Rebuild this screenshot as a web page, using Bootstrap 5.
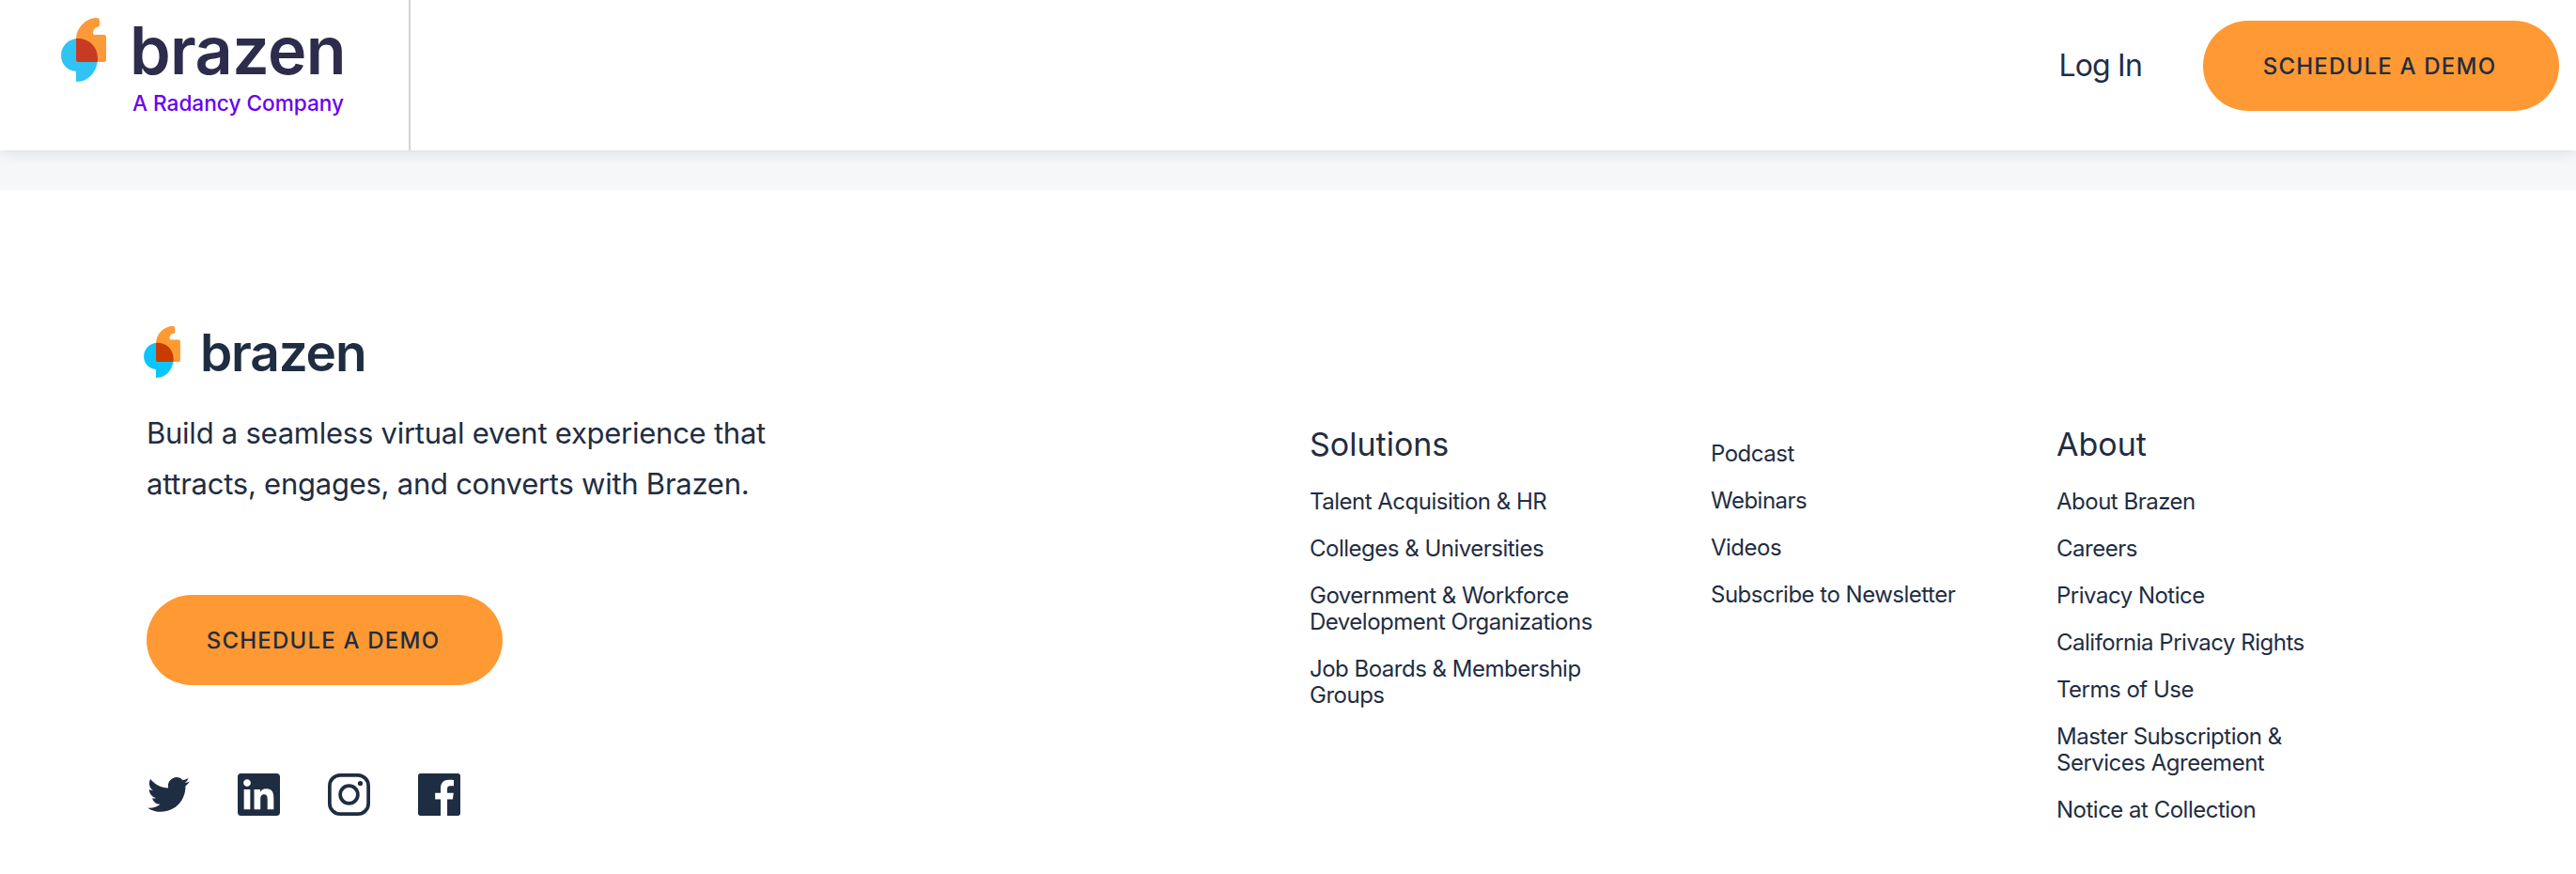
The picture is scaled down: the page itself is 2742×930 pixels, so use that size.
<!DOCTYPE html>
<html lang="en"><head><meta charset="utf-8"><title>Brazen</title>
<link href="https://cdn.jsdelivr.net/npm/bootstrap@5.3.0/dist/css/bootstrap.min.css" rel="stylesheet">
<style>
html,body{height:930px;overflow:hidden;background:#fff}
body{font-family:Inter,"Liberation Sans",sans-serif;color:#1f2d42}
a{color:inherit;text-decoration:none}
.topbar{height:160px;background:#fff;box-shadow:0 2px 14px rgba(30,40,70,.13);position:relative;z-index:2}
.brandbox{width:437px;height:160px;border-right:2px solid #d4d4d6;padding:19px 0 0 65px}
.markbig{width:48px;height:68px}
.wordwrap{margin-left:25px}
.wordbig{font-size:70px;font-weight:600;line-height:70px;color:#2e2c4c;letter-spacing:-.6px}
.subbrand{font-size:22.6px;font-weight:500;line-height:26px;color:#6a00f0;margin:8px 0 0 3px;white-space:nowrap}
.topnav{padding-bottom:20px}
.login{font-size:32px;line-height:40px;letter-spacing:-.8px;margin-right:65px}
.demo{display:inline-flex;align-items:center;justify-content:center;width:379px;height:96px;border-radius:48px;background:#ff9933;color:#1f2d42;font-size:24px;font-weight:500;letter-spacing:1.2px;border:0;padding:2px 3px 0 0}
.demo:hover{background:#ff9933;color:#1f2d42}
.topdemo{margin-right:18px}
.band{height:42px;background:#f6f7f9}
.foot{padding:145px 0 0 156px}
.leftcol{width:1238px}
.footbrand{margin-left:-3px;height:55px}
.markmid{width:39px;height:55px}
.wordmid{font-size:55px;line-height:55px;font-weight:600;letter-spacing:-1.2px;color:#1f2d42;margin-left:21px;margin-top:1px}
.pitch{font-size:31px;line-height:54px;margin:32px 0 0;letter-spacing:-.25px;white-space:nowrap}
.footdemo{margin-top:91px}
.socials{margin:94px 0 0 1px;gap:51px}
.socials svg{width:45px;height:45px;display:block;fill:#1f2d42}
.colsol{width:427px;padding-top:106px}
.colmid{width:368px;padding-top:122px}
.colabout{width:300px;padding-top:106px}
.colhead{font-size:34px;line-height:40px;font-weight:400;margin:0 0 27px;letter-spacing:0}
.linklist{font-size:24px;line-height:28px;display:flex;flex-direction:column;gap:22px;letter-spacing:-.5px}
.colsol .linklist{max-width:340px}
</style></head><body>
<header class="topbar d-flex align-items-center justify-content-between">
 <a href="#" class="brandbox d-flex align-items-start gap-0">
  <svg class="markbig flex-shrink-0" viewBox="65 19 48 68"><defs><clipPath id="oc"><path d="M81 65V42C81 29 92 19 103 19c2 0 3 1 3 3v4c0 2-1 3-3 3-3 1-4 4-4 6 0 2 1 2 2 2h10c1 0 2 1 2 2v25c0 1-1 2-2 2H83c-1 0-2-1-2-2z"/></clipPath></defs>
   <path fill="#2fc4f4" d="M82 87c-1 0-1-1-1-1V76C71 75 65 68 65 59c0-10 8-18 18-18 11 0 21 8 21 21 0 14-10 25-22 25z"/>
   <path fill="#fc9a3a" d="M81 65V42C81 29 92 19 103 19c2 0 3 1 3 3v4c0 2-1 3-3 3-3 1-4 4-4 6 0 2 1 2 2 2h10c1 0 2 1 2 2v25c0 1-1 2-2 2H83c-1 0-2-1-2-2z"/>
   <g clip-path="url(#oc)"><path fill="#c93a22" d="M82 87c-1 0-1-1-1-1V76C71 75 65 68 65 59c0-10 8-18 18-18 11 0 21 8 21 21 0 14-10 25-22 25z"/></g></svg>
  <span class="wordwrap d-block"><span class="wordbig d-block">brazen</span><span class="subbrand d-block">A Radancy Company</span></span>
 </a>
 <nav class="topnav d-flex align-items-center">
  <a href="#" class="login">Log In</a>
  <a href="#" class="btn demo topdemo">SCHEDULE A DEMO</a>
 </nav>
</header>
<div class="band"></div>
<footer class="foot d-flex align-items-start">
 <div class="leftcol">
  <a href="#" class="footbrand d-flex align-items-start">
   <svg class="markmid flex-shrink-0" viewBox="65 19 48 68"><defs><clipPath id="oc2"><path d="M81 65V42C81 29 92 19 103 19c2 0 3 1 3 3v4c0 2-1 3-3 3-3 1-4 4-4 6 0 2 1 2 2 2h10c1 0 2 1 2 2v25c0 1-1 2-2 2H83c-1 0-2-1-2-2z"/></clipPath></defs>
    <path fill="#0cc5ff" d="M82 87c-1 0-1-1-1-1V76C71 75 65 68 65 59c0-10 8-18 18-18 11 0 21 8 21 21 0 14-10 25-22 25z"/>
    <path fill="#ff9a33" d="M81 65V42C81 29 92 19 103 19c2 0 3 1 3 3v4c0 2-1 3-3 3-3 1-4 4-4 6 0 2 1 2 2 2h10c1 0 2 1 2 2v25c0 1-1 2-2 2H83c-1 0-2-1-2-2z"/>
    <g clip-path="url(#oc2)"><path fill="#c83c00" d="M82 87c-1 0-1-1-1-1V76C71 75 65 68 65 59c0-10 8-18 18-18 11 0 21 8 21 21 0 14-10 25-22 25z"/></g></svg>
   <span class="wordmid">brazen</span>
  </a>
  <p class="pitch">Build a seamless virtual event experience that<br>attracts, engages, and converts with Brazen.</p>
  <a href="#" class="btn demo footdemo">SCHEDULE A DEMO</a>
  <div class="socials d-flex">
   <a href="#" aria-label="Twitter"><svg viewBox="0 0 24 24"><path d="M23.953 4.57a10 10 0 01-2.825.775 4.958 4.958 0 002.163-2.723c-.951.555-2.005.959-3.127 1.184a4.92 4.92 0 00-8.384 4.482C7.69 8.095 4.067 6.13 1.64 3.162a4.822 4.822 0 00-.666 2.475c0 1.71.87 3.213 2.188 4.096a4.904 4.904 0 01-2.228-.616v.06a4.923 4.923 0 003.946 4.827 4.996 4.996 0 01-2.212.085 4.936 4.936 0 004.604 3.417 9.867 9.867 0 01-6.102 2.105c-.39 0-.779-.023-1.17-.067a13.995 13.995 0 007.557 2.209c9.053 0 13.998-7.496 13.998-13.985 0-.21 0-.42-.015-.63A9.935 9.935 0 0024 4.59z"/></svg></a>
   <a href="#" aria-label="LinkedIn"><svg viewBox="0 0 24 24"><path d="M20.447 20.452h-3.554v-5.569c0-1.328-.027-3.037-1.852-3.037-1.853 0-2.136 1.445-2.136 2.939v5.667H9.351V9h3.414v1.561h.046c.477-.9 1.637-1.85 3.37-1.85 3.601 0 4.267 2.37 4.267 5.455v6.286zM5.337 7.433c-1.144 0-2.063-.926-2.063-2.065 0-1.138.92-2.063 2.063-2.063 1.14 0 2.064.925 2.064 2.063 0 1.139-.925 2.065-2.064 2.065zm1.782 13.019H3.555V9h3.564v11.452zM22.225 0H1.771C.792 0 0 .774 0 1.729v20.542C0 23.227.792 24 1.771 24h20.451C23.2 24 24 23.227 24 22.271V1.729C24 .774 23.2 0 22.222 0h.003z"/></svg></a>
   <a href="#" aria-label="Instagram"><svg viewBox="0 0 24 24"><path fill-rule="evenodd" d="M7 0h10a7 7 0 017 7v10a7 7 0 01-7 7H7a7 7 0 01-7-7V7a7 7 0 017-7zm0 2a5 5 0 00-5 5v10a5 5 0 005 5h10a5 5 0 005-5V7a5 5 0 00-5-5H7zm5 4a6 6 0 110 12 6 6 0 010-12zm0 2a4 4 0 100 8 4 4 0 000-8zm6.4-3.8a1.4 1.4 0 110 2.8 1.4 1.4 0 010-2.8z"/></svg></a>
   <a href="#" aria-label="Facebook"><svg viewBox="0 0 24 24"><path d="M22.675 0H1.325C.593 0 0 .593 0 1.325v21.351C0 23.407.593 24 1.325 24H12.82v-9.294H9.692v-3.622h3.128V8.413c0-3.1 1.893-4.788 4.659-4.788 1.325 0 2.463.099 2.795.143v3.24l-1.918.001c-1.504 0-1.795.715-1.795 1.763v2.313h3.587l-.467 3.622h-3.12V24h6.116c.73 0 1.323-.593 1.323-1.325V1.325C24 .593 23.407 0 22.675 0z"/></svg></a>
  </div>
 </div>
 <div class="colsol">
  <h3 class="colhead">Solutions</h3>
  <ul class="linklist list-unstyled mb-0">
   <li><a href="#">Talent Acquisition &amp; HR</a></li>
   <li><a href="#">Colleges &amp; Universities</a></li>
   <li><a href="#">Government &amp; Workforce Development Organizations</a></li>
   <li><a href="#">Job Boards &amp; Membership Groups</a></li>
  </ul>
 </div>
 <div class="colmid">
  <ul class="linklist list-unstyled mb-0">
   <li><a href="#">Podcast</a></li>
   <li><a href="#">Webinars</a></li>
   <li><a href="#">Videos</a></li>
   <li><a href="#">Subscribe to Newsletter</a></li>
  </ul>
 </div>
 <div class="colabout">
  <h3 class="colhead">About</h3>
  <ul class="linklist list-unstyled mb-0">
   <li><a href="#">About Brazen</a></li>
   <li><a href="#">Careers</a></li>
   <li><a href="#">Privacy Notice</a></li>
   <li><a href="#">California Privacy Rights</a></li>
   <li><a href="#">Terms of Use</a></li>
   <li><a href="#">Master Subscription &amp; Services Agreement</a></li>
   <li><a href="#">Notice at Collection</a></li>
  </ul>
 </div>
</footer>
<script src="https://cdn.jsdelivr.net/npm/bootstrap@5.3.0/dist/js/bootstrap.bundle.min.js"></script>
</body></html>
